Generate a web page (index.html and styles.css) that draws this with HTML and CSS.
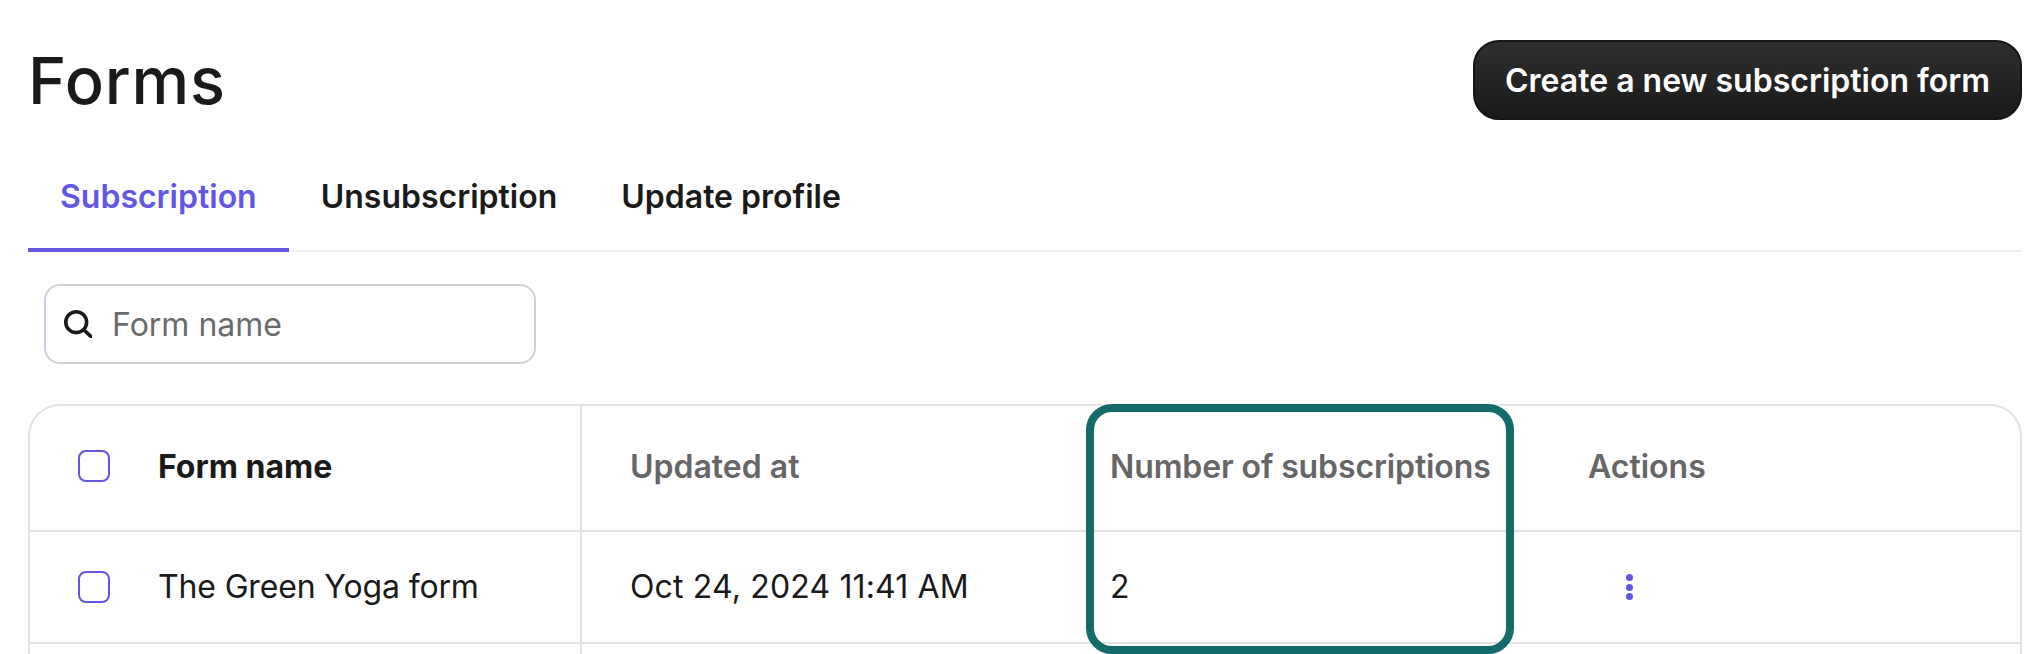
FILE: index.html
```html
<!DOCTYPE html>
<html lang="en">
<head>
  <meta charset="UTF-8" />
  <title>Forms</title>
  <link rel="stylesheet" href="styles.css">
</head>
<body>
  <div class="page">

    <!-- Title -->
    <div class="page-header">
      <h1>Forms</h1>
      <button class="create-btn">Create a new subscription form</button>
    </div>

    <!-- Tabs -->
    <div class="tabs">
      <div class="tab active">Subscription</div>
      <div class="tab">Unsubscription</div>
      <div class="tab">Update profile</div>
    </div>

    <!-- Search -->
    <div class="search">
      <svg class="search-icon" width="28" height="28" viewBox="0 0 28 28" fill="none" stroke="#1a1a1a" stroke-width="3.6" stroke-linecap="round">
        <circle cx="12.2" cy="12.2" r="10.4"/>
        <path d="M20 20l7 6.6"/>
      </svg>
      <input type="text" placeholder="Form name" />
    </div>

    <!-- Forms table -->
    <div class="table-wrap">
      <div class="row head">
        <div class="cell name-cell">
          <span class="checkbox"></span>
          <span class="name-title">Form name</span>
        </div>
        <div class="cell">Updated at</div>
        <div class="cell count-title">Number of subscriptions</div>
        <div class="cell">Actions</div>
      </div>
      <div class="row body-row">
        <div class="cell name-cell">
          <span class="checkbox"></span>
          <span class="name-text">The Green Yoga form</span>
        </div>
        <div class="cell date-text">Oct 24, 2024 11:41 AM</div>
        <div class="cell date-text">2</div>
        <div class="cell">
          <span class="dots"><i></i><i></i><i></i></span>
        </div>
      </div>
      <div class="row empty-row">
        <div class="cell name-cell"></div>
      </div>

      <!-- Highlight around the subscriptions column -->
      <div class="highlight"></div>
    </div>

  </div>
</body>
</html>
```

FILE: styles.css
```css
* {
  margin: 0;
  padding: 0;
  box-sizing: border-box;
}

html, body {
  height: 100%;
  overflow: hidden;
  background: #fff;
}

body {
  font-family: Inter, "Liberation Sans", sans-serif;
  font-size: 32px;
  color: #1a1a1a;
}

.page {
  height: 654px;
  padding: 40px 18px 0 28px;
}

/* Title */
.page-header {
  display: flex;
  justify-content: space-between;
  align-items: center;
  height: 80px;
}

h1 {
  font-size: 65px;
  font-weight: 450;
  letter-spacing: 0.8px;
  color: #1a1a1a;
}

.create-btn {
  height: 80px;
  width: 549px;
  border: 2px solid #161616;
  border-radius: 26px;
  background: linear-gradient(#2f2f2f, #1a1a1a);
  color: #fff;
  font-family: inherit;
  font-size: 32px;
  font-weight: 600;
}

/* Tabs */
.tabs {
  display: flex;
  height: 112px;
  margin-top: 20px;
  border-bottom: 2px solid #f0f0f0;
}

.tab {
  display: flex;
  align-items: center;
  height: 112px;
  padding: 0 32px;
  font-weight: 600;
}

.tab.active {
  padding-top: 4px;
  color: #6456e4;
  border-bottom: 4px solid #6456e4;
}

/* Search */
.search {
  display: flex;
  align-items: center;
  gap: 20px;
  width: 492px;
  height: 80px;
  margin: 32px 0 0 16px;
  padding-left: 18px;
  border: 2px solid #d2d2d2;
  border-left-color: #c4cfdc;
  border-radius: 16px;
}

.search-icon {
  flex: none;
}

.search input {
  flex: 1;
  min-width: 0;
  border: none;
  outline: none;
  background: none;
  font-family: inherit;
  font-size: 32px;
}

.search input::placeholder {
  color: #6b6b6b;
  opacity: 1;
}

/* Table */
.table-wrap {
  position: relative;
  height: 250px;
  margin-top: 40px;
  border: 2px solid #e3e3e3;
  border-bottom: none;
  border-radius: 32px 32px 0 0;
}

.row {
  display: grid;
  grid-template-columns: 552px 480px 478px 1fr;
  border-bottom: 2px solid #e3e3e3;
}

.row.head {
  height: 126px;
  font-weight: 600;
  color: #666;
}

.row.head .cell {
  padding-bottom: 4px;
}

.row.body-row {
  height: 112px;
}

.row.empty-row {
  height: 10px;
  border-bottom: none;
}

.cell {
  display: flex;
  align-items: center;
  padding-left: 48px;
}

.name-cell {
  gap: 48px;
  border-right: 2px solid #e3e3e3;
}

.name-title {
  font-weight: 700;
  color: #1a1a1a;
}

.name-text {
  position: relative;
  top: -1px;
  letter-spacing: -0.15px;
}

.date-text {
  padding-bottom: 2px;
  letter-spacing: 0.15px;
}

.count-title {
  letter-spacing: -0.12px;
}

.checkbox {
  width: 32px;
  height: 32px;
  border: 2px solid #6456e4;
  border-radius: 8px;
}

.dots {
  display: flex;
  flex-direction: column;
  gap: 2.5px;
  margin-left: 38px;
}

.dots i {
  width: 7px;
  height: 7px;
  border-radius: 50%;
  background: #6456e4;
}

.highlight {
  position: absolute;
  top: -2px;
  left: 1056px;
  width: 428px;
  height: 250px;
  border: 8px solid #136c6a;
  border-radius: 26px;
}
```
